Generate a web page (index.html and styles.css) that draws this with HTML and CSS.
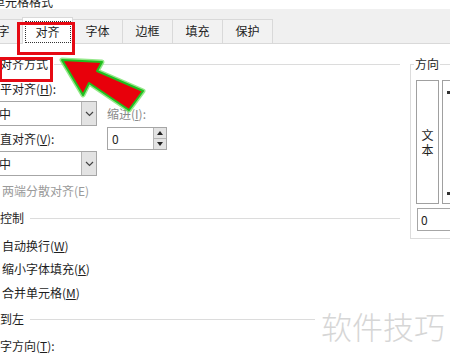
FILE: index.html
```html
<!DOCTYPE html>
<html lang="zh-CN">
  <head>
    <meta charset="UTF-8">
    <meta name="viewport" content="width=device-width, initial-scale=1.0">
    <title>单元格格式</title>
    <link rel="stylesheet" href="styles.css">
  </head>
  <body>
    <div class="titlebar"><span class="title">单元格格式</span></div>

    <div class="tabs">
      <div class="tab">数字</div>
      <div class="tab active"><span class="focus">对齐</span></div>
      <div class="tab">字体</div>
      <div class="tab">边框</div>
      <div class="tab">填充</div>
      <div class="tab">保护</div>
    </div>

    <div class="content">
      <div class="left">
        <div class="group-head first"><span>文本对齐方式</span></div>
        <div class="inner">
          <div class="align-grid">
            <div class="label">水平对齐(<u>H</u>):</div>
            <div></div>
            <div class="select">
              <span class="val">居中</span>
              <span class="btn"><svg width="9" height="6" viewBox="0 0 9 6"><path d="M1 1 L4.5 4.5 L8 1" fill="none" stroke="#444" stroke-width="1.2"/></svg></span>
            </div>
            <div class="label muted">缩进(<u>I</u>):</div>
            <div class="label">垂直对齐(<u>V</u>):</div>
            <div class="spin">
              <span class="num">0</span>
              <span class="arrows">
                <span class="half"><svg width="6" height="4" viewBox="0 0 6 4"><path d="M0 4 L3 0 L6 4 Z" fill="#222"/></svg></span>
                <span class="half"><svg width="6" height="4" viewBox="0 0 6 4"><path d="M0 0 L3 4 L6 0 Z" fill="#222"/></svg></span>
              </span>
            </div>
            <div class="select">
              <span class="val">居中</span>
              <span class="btn"><svg width="9" height="6" viewBox="0 0 9 6"><path d="M1 1 L4.5 4.5 L8 1" fill="none" stroke="#444" stroke-width="1.2"/></svg></span>
            </div>
          </div>
        </div>
        <div class="check disabled distribute"><span class="box"></span><span>两端分散对齐(E)</span></div>

        <div class="group-head control"><span>文本控制</span></div>
        <div class="check wrap"><span class="box"></span><span>自动换行(<u>W</u>)</span></div>
        <div class="check shrink"><span class="box"></span><span>缩小字体填充(<u>K</u>)</span></div>
        <div class="check merge"><span class="box"></span><span>合并单元格(<u>M</u>)</span></div>

        <div class="group-head rtl"><span>从右到左</span></div>
        <div class="inner">
          <div class="label direction">文字方向(<u>T</u>):</div>
        </div>
      </div>

      <div class="right">
        <div class="orient">
          <div class="orient-title">方向</div>
          <div class="orient-body">
            <div class="vtext"><span>文</span><span>本</span></div>
            <div class="dial"><span class="dot"></span><span class="dot"></span></div>
          </div>
          <div class="deg">0</div>
        </div>
      </div>
    </div>

    <div class="mark mark-tab"></div>
    <div class="mark mark-label"></div>

    <svg class="arrow" width="450" height="360" viewBox="0 0 450 360">
      <polygon points="62,60 102,62 97,71 143,91 129,110 89,83 83,95" fill="#e8000b" stroke="#7be36e" stroke-width="5" stroke-linejoin="round" opacity="0.8"/>
      <polygon points="62,60 102,62 97,71 143,91 129,110 89,83 83,95" fill="#e8000b" stroke="#1fbf1f" stroke-width="2" stroke-linejoin="round"/>
    </svg>

    <div class="watermark">软件技巧</div>
  </body>
</html>
```

FILE: styles.css
```css
* {
  box-sizing: border-box;
}

body {
  margin: 0;
  width: 450px;
  height: 360px;
  overflow: hidden;
  position: relative;
  background: #fff;
  color: #1e1e1e;
  font-family: "Noto Sans CJK SC", "Microsoft YaHei", sans-serif;
  font-size: 12px;
}

.titlebar {
  height: 15px;
}

.titlebar .title {
  display: block;
  margin: -6px 0 0 -7px;
  line-height: 16px;
}

.tabs {
  height: 35px;
  margin-left: -28px;
  background: #f0f0f0;
  border-bottom: 1px solid #d9d9d9;
  display: flex;
  align-items: flex-end;
}

.tab {
  width: 51px;
  height: 24px;
  margin-left: -1px;
  border: 1px solid #d9d9d9;
  border-bottom: none;
  background: #f2f2f2;
  text-align: center;
  line-height: 22px;
}

.tab:first-child {
  margin-left: 0;
}

.tab.active {
  height: 27px;
  margin-bottom: -1px;
  padding-top: 2px;
  background: #fff;
  position: relative;
  z-index: 1;
  display: flex;
  align-items: center;
  justify-content: center;
}

.tab .focus {
  display: block;
  width: 44px;
  height: 20px;
  line-height: 20px;
  outline: 1px dotted #333;
}

.content {
  display: flex;
  gap: 10px;
  margin-left: -24px;
}

.left {
  width: 424px;
  flex: none;
}

.group-head {
  display: flex;
  align-items: center;
  height: 16px;
  line-height: 16px;
}

.group-head::after {
  content: "";
  flex: 1;
  height: 1px;
  margin-left: 6px;
  background: #dcdcdc;
}

.group-head.first {
  margin-top: 12px;
}

.group-head.control {
  margin-top: 11px;
}

.group-head.rtl {
  margin-top: 10px;
}

.inner {
  padding-left: 12px;
}

.align-grid {
  margin-top: 9px;
  display: grid;
  grid-template-columns: 109px 60px;
  grid-template-rows: 19px 25px 23px 25px;
  column-gap: 10px;
  row-gap: 1px;
}

.label {
  line-height: 16px;
  align-self: center;
}

.align-grid .label:first-child {
  align-self: start;
}

.muted {
  color: #8a8a8a;
}

.select {
  height: 25px;
  border: 1px solid #a6a6a6;
  display: flex;
  background: #fff;
}

.select .val {
  flex: 1;
  margin-left: -2px;
  line-height: 23px;
}

.select .btn {
  width: 15px;
  background: #e3e3e3;
  border-left: 1px solid #b5b5b5;
  display: flex;
  align-items: center;
  justify-content: center;
}

.spin {
  height: 23px;
  border: 1px solid #a6a6a6;
  display: flex;
}

.spin .num {
  flex: 1;
  padding-left: 4px;
  line-height: 21px;
}

.spin .arrows {
  width: 13px;
  display: flex;
  flex-direction: column;
  border-left: 1px solid #b5b5b5;
}

.spin .half {
  flex: 1;
  background: #e3e3e3;
  display: flex;
  align-items: center;
  justify-content: center;
}

.spin .half + .half {
  border-top: 1px solid #b5b5b5;
}

.check {
  display: flex;
  align-items: center;
  gap: 9px;
  height: 16px;
  padding-left: 4px;
  line-height: 16px;
}

.check .box {
  width: 13px;
  height: 13px;
  border: 1px solid #333;
}

.check.disabled {
  color: #9a9a9a;
}

.check.disabled .box {
  border-color: #bbb;
}

.distribute {
  margin-top: 7px;
}

.wrap {
  margin-top: 12px;
}

.shrink {
  margin-top: 7px;
}

.merge {
  margin-top: 8px;
}

.direction {
  margin-top: 11px;
}

.right {
  width: 120px;
  flex: none;
}

.orient {
  margin-top: 20px;
  height: 175px;
  border: 1px solid #dcdcdc;
  border-right: none;
  line-height: 16px;
}

.orient-title {
  width: max-content;
  height: 16px;
  margin: -9px 0 0 3px;
  padding: 0 1px;
  background: #fff;
}

.orient-body {
  display: flex;
  gap: 3px;
  margin: 8px 0 0 5px;
}

.vtext {
  width: 23px;
  height: 124px;
  border: 1px solid #a0a0a0;
  display: flex;
  flex-direction: column;
  align-items: center;
  justify-content: center;
  line-height: 15px;
}

.dial {
  width: 60px;
  height: 124px;
  border: 1px solid #a0a0a0;
  padding: 10px 0 8px 4px;
  display: flex;
  flex-direction: column;
  justify-content: space-between;
}

.dial .dot {
  width: 3px;
  height: 3px;
  background: #333;
}

.deg {
  width: 60px;
  height: 23px;
  margin: 4px 0 0 6px;
  padding-left: 3px;
  border: 1px solid #a6a6a6;
  line-height: 21px;
}

.mark {
  position: absolute;
  border: 3px solid #e60a14;
}

.mark-tab {
  left: 17px;
  top: 22px;
  width: 58px;
  height: 33px;
  z-index: 2;
}

.mark-label {
  left: -1px;
  top: 57px;
  width: 54px;
  height: 25px;
}

.arrow {
  position: absolute;
  left: 0;
  top: 0;
  pointer-events: none;
}

.watermark {
  position: absolute;
  left: 315px;
  top: 307px;
  padding: 3px 5px 3px 6px;
  background: #fff;
  color: #d6d6d6;
  font-size: 31px;
  line-height: 31px;
  font-weight: 300;
}
```
